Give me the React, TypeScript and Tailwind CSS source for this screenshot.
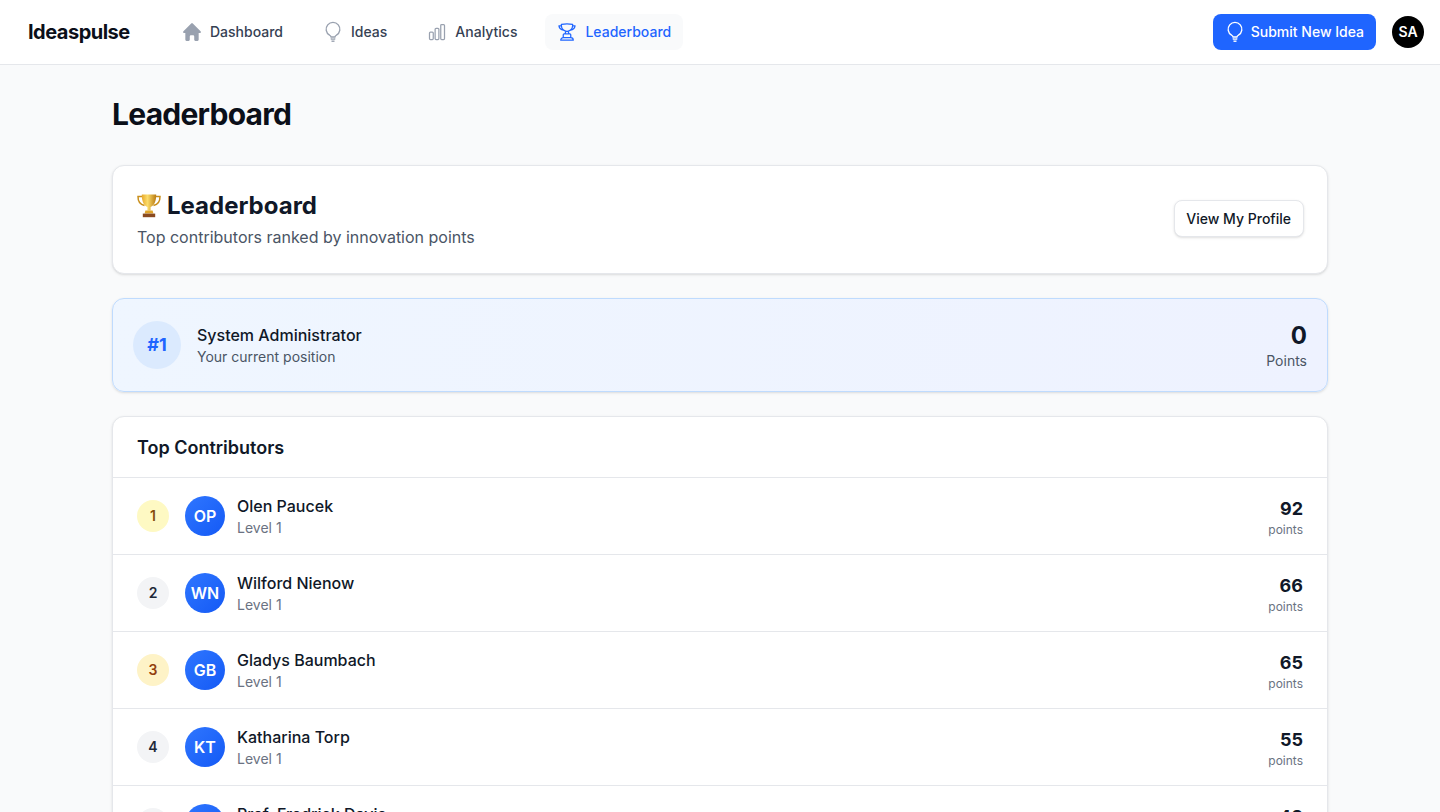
import React from 'react';

const BLUE = 'text-[#1f65ff]';

type Contributor = { rank: number; name: string; initials: string; points: number };

const contributors: Contributor[] = [
  { rank: 1, name: 'Olen Paucek', initials: 'OP', points: 92 },
  { rank: 2, name: 'Wilford Nienow', initials: 'WN', points: 66 },
  { rank: 3, name: 'Gladys Baumbach', initials: 'GB', points: 65 },
  { rank: 4, name: 'Katharina Torp', initials: 'KT', points: 55 },
  { rank: 5, name: 'Prof. Fredrick Davis', initials: 'FD', points: 48 },
];

const HomeIcon = () => (
  <svg viewBox="1 1 18 18" fill="currentColor" className="w-5 h-5 text-gray-400">
    <path d="M9.293 2.293a1 1 0 0 1 1.414 0l7 7A1 1 0 0 1 17 11h-1v6a1 1 0 0 1-1 1h-2a1 1 0 0 1-1-1v-3a1 1 0 0 0-1-1H9a1 1 0 0 0-1 1v3a1 1 0 0 1-1 1H5a1 1 0 0 1-1-1v-6H3a1 1 0 0 1-.707-1.707l7-7Z" />
  </svg>
);

const BulbIcon = ({ className }: { className: string }) => (
  <svg viewBox="0 0 24 24" fill="none" stroke="currentColor" strokeWidth={1.5} strokeLinecap="round" strokeLinejoin="round" className={className}>
    <path d="M14 19.6a12.060 12.060 0 0 1-4 0M13.200 22a14.406 14.406 0 0 1-2.400 0M14.250 17.500v-.192c0-.983.658-1.323 1.508-1.816a7.500 7.500 0 1 0-7.517 0c.85.493 1.509.833 1.509 1.816v.192h4.500Z" />
  </svg>
);

const ChartIcon = () => (
  <svg viewBox="0 0 24 24" fill="none" stroke="currentColor" strokeWidth={1.5} strokeLinecap="round" strokeLinejoin="round" className="w-5 h-5 text-gray-400">
    <path d="M3 13.125C3 12.504 3.504 12 4.125 12h2.25c.621 0 1.125.504 1.125 1.125v6.75C7.5 20.496 6.996 21 6.375 21h-2.25A1.125 1.125 0 0 1 3 19.875v-6.75ZM9.750 8.625c0-.621.504-1.125 1.125-1.125h2.250c.621 0 1.125.504 1.125 1.125v11.250c0 .621-.504 1.125-1.125 1.125h-2.250a1.125 1.125 0 0 1-1.125-1.125V8.625ZM16.500 4.125c0-.621.504-1.125 1.125-1.125h2.250C20.496 3 21 3.504 21 4.125v15.750c0 .621-.504 1.125-1.125 1.125h-2.250a1.125 1.125 0 0 1-1.125-1.125V4.125Z" />
  </svg>
);

const TrophyIcon = () => (
  <svg viewBox="0 0 24 24" fill="none" stroke="currentColor" strokeWidth={1.5} strokeLinecap="round" strokeLinejoin="round" className={`w-5 h-5 ${BLUE}`}>
    <path d="M16.500 18.750h-9m9 0a3 3 0 0 1 3 3h-15a3 3 0 0 1 3-3m9 0v-3.375c0-.621-.503-1.125-1.125-1.125h-.871M7.500 18.750v-3.375c0-.621.504-1.125 1.125-1.125h.872m5.007 0H9.497m5.007 0a7.454 7.454 0 0 1-.982-3.172M9.497 14.250a7.454 7.454 0 0 0 .981-3.172M5.250 4.236c-.982.143-1.954.317-2.916.52A6.003 6.003 0 0 0 7.730 9.728M5.250 4.236V4.500c0 2.108.966 3.990 2.480 5.228M5.250 4.236V2.721C7.456 2.410 9.710 2.250 12 2.250c2.291 0 4.545.16 6.750.47v1.516M7.730 9.728a6.726 6.726 0 0 0 2.748 1.350m8.272-6.842V4.500c0 2.108-.966 3.990-2.480 5.228m2.480-5.492a46.320 46.320 0 0 1 2.916.52 6.003 6.003 0 0 1-5.395 4.972m0 0a6.726 6.726 0 0 1-2.749 1.350m0 0a6.772 6.772 0 0 1-3.044 0" />
  </svg>
);

// stands in for the colour trophy emoji
const TrophyEmoji = () => (
  <svg viewBox="0 0 24 24" className="w-6 h-6 shrink-0">
    <defs>
      <linearGradient id="cup" x1="0" y1="0" x2="1" y2="0">
        <stop offset="0" stopColor="#e8a92c" />
        <stop offset="0.4" stopColor="#fbdc6a" />
        <stop offset="1" stopColor="#b97a12" />
      </linearGradient>
    </defs>
    <path d="M5.500 2.500H1c-.1 4.600 2.200 8 6.500 9M18.500 2.500H23c.1 4.600-2.200 8-6.500 9" fill="none" stroke="#c98f1c" strokeWidth="1.500" />
    <path d="M4.800 0.500h14.400c0 6.500-1.600 10.700-5.600 12.500v3.600h-3.200V13C6.400 11.200 4.800 7 4.800 0.500Z" fill="url(#cup)" />
    <path d="M8.400 16.600h7.200l.8 3H7.600z" fill="#e0a52a" />
    <path d="M5.800 19.600h12.400v3.600H5.800z" fill="#8a4a20" />
  </svg>
);

const navItems = [
  { label: 'Dashboard', icon: <HomeIcon /> },
  { label: 'Ideas', icon: <BulbIcon className="w-[22px] h-[22px] -mx-px text-gray-400" /> },
  { label: 'Analytics', icon: <ChartIcon /> },
];

const rankBadgeClass = (rank: number) => {
  if (rank === 1) return 'bg-[#fef9c3] text-[#854d0e]';
  if (rank === 3) return 'bg-[#fef3c7] text-[#92400e]';
  return 'bg-gray-100 text-gray-800';
};

const ContributorRow = ({ person }: { person: Contributor }) => (
  <div className="flex items-center justify-between h-[77px] px-6 border-t border-gray-200">
    <div className="flex items-center">
      <div className={`w-8 h-8 rounded-full flex items-center justify-center text-sm font-semibold ${rankBadgeClass(person.rank)}`}>
        {person.rank}
      </div>
      <div className="ml-4 w-10 h-10 rounded-full bg-gradient-to-br from-[#2f76ff] to-[#1459f5] flex items-center justify-center text-white font-semibold text-base">
        {person.initials}
      </div>
      <div className="ml-3">
        <p className="text-base leading-6 font-medium text-gray-900">{person.name}</p>
        <p className="text-sm leading-5 text-gray-500">Level 1</p>
      </div>
    </div>
    <div className="text-right">
      <p className="text-lg pt-0.5 leading-[26px] font-bold text-gray-900">{person.points}</p>
      <p className="text-xs leading-4 text-gray-500">points</p>
    </div>
  </div>
);

export default function App() {
  return (
    <div className="min-h-screen bg-[#f9fafb] antialiased font-['Inter',sans-serif]">
      {/* Top navigation */}
      <header className="h-[65px] bg-white border-b border-gray-200 flex items-center justify-between pl-7 pr-4">
        <div className="flex items-center">
          <span className="text-xl font-bold text-[#0b0f19] tracking-tight w-[142px]">Ideaspulse</span>
          <nav className="flex items-center gap-4">
            {navItems.map((item) => (
              <a key={item.label} className="flex items-center gap-2 h-9 px-3 rounded-lg text-sm font-medium text-gray-700">
                {item.icon}
                {item.label}
              </a>
            ))}
            <a className={`flex items-center gap-2 h-9 px-3 rounded-lg text-sm font-medium bg-[#f9fafb] ${BLUE}`}>
              <TrophyIcon />
              Leaderboard
            </a>
          </nav>
        </div>
        <div className="flex items-center gap-4">
          <button className="flex items-center gap-1.5 h-9 px-3 rounded-lg bg-[#1f65ff] text-white text-sm font-medium">
            <BulbIcon className="w-[22px] h-[22px] -mx-px text-white" />
            Submit New Idea
          </button>
          <div className="w-8 h-8 rounded-full bg-black text-white flex items-center justify-center text-sm font-semibold">SA</div>
        </div>
      </header>

      <main className="max-w-7xl mx-auto px-8 pt-[31px]">
        <h1 className="text-3xl leading-9 font-bold tracking-tight text-[#0b0f19] mb-[33px]">Leaderboard</h1>

        <section className="bg-white border border-gray-200 rounded-xl shadow-sm h-[109px] pl-6 pr-[23px] flex items-center justify-between">
          <div>
            <h2 className="flex items-center gap-1.5 text-2xl leading-8 font-bold text-gray-900">
              <TrophyEmoji />
              Leaderboard
            </h2>
            <p className="text-base leading-6 mt-[3px] text-gray-600">Top contributors ranked by innovation points</p>
          </div>
          <button className="h-[37px] -mt-0.5 pl-[11px] pr-3 bg-white border border-gray-200 rounded-lg shadow-sm text-sm font-medium text-gray-900">View My Profile</button>
        </section>

        <section className="mt-6 h-[94px] px-5 bg-gradient-to-r from-[#eff6ff] to-[#eef2ff] border border-[#bfdbfe] rounded-xl shadow-sm flex items-center justify-between">
          <div className="flex items-center">
            <div className={`w-12 h-12 rounded-full bg-[#dbeafe] flex items-center justify-center text-lg font-bold ${BLUE}`}>#1</div>
            <div className="ml-4">
              <p className="text-base leading-6 font-medium text-gray-900">System Administrator</p>
              <p className="text-sm leading-5 text-gray-600">Your current position</p>
            </div>
          </div>
          <div className="text-right">
            <p className="text-2xl pt-0.5 leading-[30px] font-bold text-gray-900">0</p>
            <p className="text-sm leading-5 text-gray-600">Points</p>
          </div>
        </section>

        <section className="mt-6 bg-white border border-gray-200 rounded-xl shadow-sm">
          <h3 className="h-[60px] pt-0.5 px-6 flex items-center text-lg font-semibold text-gray-900">Top Contributors</h3>
          {contributors.map((person) => (
            <ContributorRow key={person.rank} person={person} />
          ))}
        </section>
      </main>
    </div>
  );
}
